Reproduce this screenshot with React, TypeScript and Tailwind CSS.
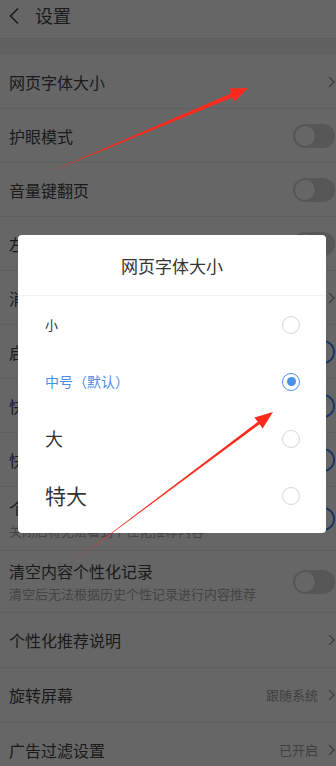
import React from "react";

type Row = {
  title: string;
  sub?: string;
  kind: "arrow" | "off" | "on";
  value?: string;
  h: string;
};

const rows: Row[] = [
  { title: "网页字体大小", kind: "arrow", h: "h-[54px]" },
  { title: "护眼模式", kind: "off", h: "h-[54px]" },
  { title: "音量键翻页", kind: "off", h: "h-[54px]" },
  { title: "左右滑动前进后退", kind: "off", h: "h-[54px]" },
  { title: "消息推送设置", kind: "arrow", h: "h-[54px]" },
  { title: "启动时恢复标签页", kind: "on", h: "h-[54px]" },
  { title: "快速翻页按钮", kind: "on", h: "h-[54px]" },
  { title: "快捷搜索入口", kind: "on", h: "h-[54px]" },
  { title: "个性化推荐", sub: "关闭后将无法看到个性化推荐内容", kind: "on", h: "h-[64px]" },
  { title: "清空内容个性化记录", sub: "清空后无法根据历史个性记录进行内容推荐", kind: "off", h: "h-[62px]" },
  { title: "个性化推荐说明", kind: "arrow", h: "h-[55px]" },
  { title: "旋转屏幕", kind: "arrow", value: "跟随系统", h: "h-[55px]" },
  { title: "广告过滤设置", kind: "arrow", value: "已开启", h: "h-[55px]" },
];

const options = [
  { label: "小", cls: "text-[13px]" },
  { label: "中号（默认）", cls: "text-[14px] text-[#4a8fe6]", active: true },
  { label: "大", cls: "text-[18px]" },
  { label: "特大", cls: "text-[21px]" },
];

function Chevron() {
  return (
    <svg width="7" height="12" viewBox="0 0 7 12" className="shrink-0">
      <path d="M1 1l5 5-5 5" fill="none" stroke="#9a9a9a" strokeWidth="1.3" />
    </svg>
  );
}

function Toggle({ on }: { on: boolean }) {
  if (on) {
    return (
      <div className="flex h-[24px] w-[42px] shrink-0 items-center justify-end rounded-full border-2 border-[#4a80f0] bg-[#eef3fd]">
        <div className="h-[20px] w-[20px] rounded-full bg-white" />
      </div>
    );
  }
  return (
    <div className="flex h-[24px] w-[42px] shrink-0 items-center rounded-full bg-[#d9d9d9] px-[1px]">
      <div className="h-[22px] w-[22px] rounded-full border border-[#cfcfcf] bg-white" />
    </div>
  );
}

export default function App() {
  return (
    <div className="relative h-[766px] w-[336px] overflow-hidden bg-white font-['Noto_Sans_CJK_SC',sans-serif] text-[#444]">
      <div className="flex h-[39px] items-start gap-[15px] border-b border-[#e6e6e6] pl-[8px] pt-[4px]">
        <svg width="12" height="18" viewBox="0 0 12 18" className="mt-[3px]">
          <path d="M10 1.5L2.5 9l7.5 7.5" fill="none" stroke="#444" strokeWidth="1.6" />
        </svg>
        <span className="text-[18px] leading-[22px]">设置</span>
      </div>
      <div className="h-[16px] bg-[#f3f3f3]" />

      {rows.map((r) => (
        <div
          key={r.title}
          className={`flex items-center justify-between border-b border-[#eeeeee] pl-[9px] pr-[1px] ${r.h}`}
        >
          <div className="flex flex-col gap-[3px]">
            <span className="whitespace-nowrap text-[16px] leading-[22px]">{r.title}</span>
            {r.sub && (
              <span className="whitespace-nowrap text-[13px] leading-[18px] text-[#aaaaaa]">{r.sub}</span>
            )}
          </div>
          {r.kind === "arrow" ? (
            <div className="flex items-center gap-[10px]">
              {r.value && <span className="text-[13px] text-[#9f9f9f]">{r.value}</span>}
              <Chevron />
            </div>
          ) : (
            <Toggle on={r.kind === "on"} />
          )}
        </div>
      ))}

      <div className="absolute inset-0 bg-black/60" />

      <div className="absolute left-[18px] top-[235px] w-[308px] rounded-[4px] bg-white pb-[9px] text-[#333]">
        <div className="flex h-[61px] items-center justify-center border-b border-[#f2f2f2] pt-[2px] text-[17px]">
          网页字体大小
        </div>
        {options.map((o) => (
          <div key={o.label} className="flex h-[57px] items-center justify-between pl-[27px] pr-[26px]">
            <span className={o.cls}>{o.label}</span>
            {o.active ? (
              <div className="flex h-[18px] w-[18px] items-center justify-center rounded-full border-[1.5px] border-[#4a8fe6]">
                <div className="h-[9px] w-[9px] rounded-full bg-[#4a8fe6]" />
              </div>
            ) : (
              <div className="h-[18px] w-[18px] rounded-full border-[1.5px] border-[#d6d6d6]" />
            )}
          </div>
        ))}
      </div>

      <svg className="pointer-events-none absolute inset-0" width="336" height="766" viewBox="0 0 336 766">
        <polygon
          points="50,172 232.2,97.4 234.8,101.5 248,88 229.6,88.5 231,93.6"
          fill="#ff2a1c"
        />
        <polygon
          points="73,562 259.6,424.2 262.6,428.4 273,412 254.4,417.6 257.8,421.8"
          fill="#ff2a1c"
        />
      </svg>
    </div>
  );
}
